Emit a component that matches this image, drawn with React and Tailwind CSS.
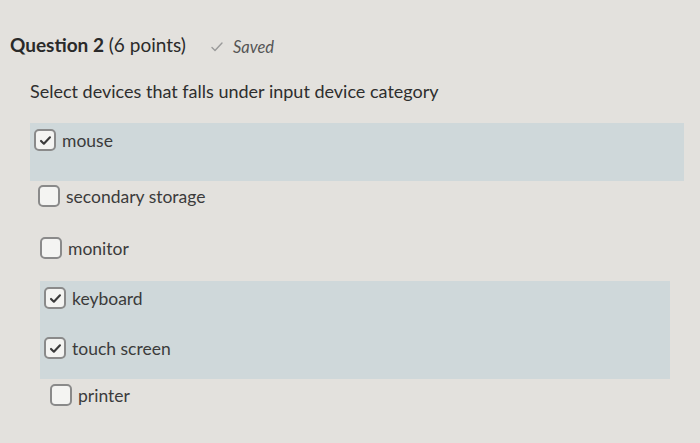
import { useState } from 'react';

const OPTIONS = [
  { label: 'mouse', checked: true },
  { label: 'secondary storage', checked: false },
  { label: 'monitor', checked: false },
  { label: 'keyboard', checked: true },
  { label: 'touch screen', checked: true },
  { label: 'printer', checked: false },
];

function Box({ checked }) {
  return (
    <span className="w-[22px] h-[22px] rounded-[5px] border-2 border-[#8a8a8a] bg-[#f4f4f2] flex items-center justify-center shrink-0">
      {checked && (
        <svg width="13" height="13" viewBox="0 0 16 16" fill="none">
          <path d="M2.5 8.5l3.5 3.5 7.5-8" stroke="#3a3a3a" strokeWidth="2.6" strokeLinecap="round" strokeLinejoin="round" />
        </svg>
      )}
    </span>
  );
}

function Option({ opt, onToggle }) {
  return (
    <label className="flex items-center gap-[6px] h-[22px] cursor-pointer" onClick={onToggle}>
      <Box checked={opt.checked} />
      <span className="text-[17.5px] text-[#3b3b3b] leading-none">{opt.label}</span>
    </label>
  );
}

export default function App() {
  const [opts, setOpts] = useState(OPTIONS);
  const toggle = (i) => setOpts(o => o.map((x, j) => j === i ? { ...x, checked: !x.checked } : x));

  return (
    <div className="w-[700px] h-[443px] bg-[#e3e1dd] overflow-hidden" style={{ fontFamily: 'Lato, "Noto Sans", sans-serif' }}>
      {/* Header */}
      <div className="pt-[33px] pl-[10px] flex items-baseline">
        <h2 className="text-[19px] leading-[24px] text-[#2a2a2a]">
          <span className="font-bold">Question 2</span> (6 points)
        </h2>
        <span className="ml-[25px] flex items-center gap-[10px] text-[16.5px] italic text-[#555]">
          <svg width="12" height="10" viewBox="0 0 12 10" fill="none">
            <path d="M1 5.5l3 3 7-7.5" stroke="#9a9a9a" strokeWidth="1.4" strokeLinecap="round" strokeLinejoin="round" />
          </svg>
          Saved
        </span>
      </div>
      <p className="pl-[30px] mt-[21px] text-[18px] leading-[22px] text-[#2e2e2e]">
        Select devices that falls under input device category
      </p>

      {/* Answers */}
      <div className="mt-[21px] flex flex-col">
        <div className="ml-[30px] w-[654px] h-[58px] bg-[#cfd8da] pl-[4px] pt-[6px]">
          <Option opt={opts[0]} onToggle={() => toggle(0)} />
        </div>
        <div className="pl-[38px] pt-[4px] h-[54px]">
          <Option opt={opts[1]} onToggle={() => toggle(1)} />
        </div>
        <div className="pl-[40px] pt-[2px] h-[46px]">
          <Option opt={opts[2]} onToggle={() => toggle(2)} />
        </div>
        <div className="ml-[40px] w-[630px] h-[98px] bg-[#cfd8da] pl-[4px] pt-[6px] flex flex-col gap-[28px]">
          <Option opt={opts[3]} onToggle={() => toggle(3)} />
          <Option opt={opts[4]} onToggle={() => toggle(4)} />
        </div>
        <div className="pl-[50px] pt-[5px]">
          <Option opt={opts[5]} onToggle={() => toggle(5)} />
        </div>
      </div>
    </div>
  );
}
